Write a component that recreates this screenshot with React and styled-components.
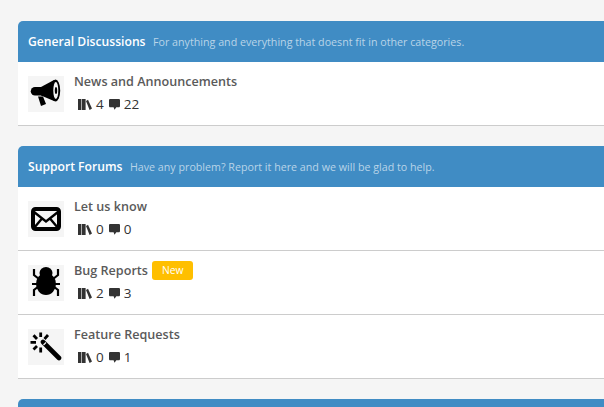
import styled, { createGlobalStyle } from "styled-components";

const GlobalStyle = createGlobalStyle`
  html, body {
    margin: 0;
    height: 100%;
    overflow: hidden;
    background: #f5f5f5;
  }
  body {
    font-family: "Open Sans", "Liberation Sans", sans-serif;
  }
`;

const Page = styled.div`
  box-sizing: border-box;
  height: 100vh;
  overflow: hidden;
  padding: 21px 0 0 18px;
  display: flex;
  flex-direction: column;
  gap: 20px;
`;

const Panel = styled.section`
  flex: none;
  background: #fff;
  border-top-left-radius: 5px;
`;

const Header = styled.header`
  height: 41px;
  background: #408cc4;
  border-radius: 5px 0 0 0;
  display: flex;
  align-items: center;
  padding-left: 10px;
  gap: 7.500px;
`;

const Heading = styled.h2`
  margin: 0;
  font-size: 12.150px;
  font-weight: 600;
  color: #fff;
`;

const Description = styled.span`
  font-size: 10.700px;
  color: #b9d4e8;
`;

const Row = styled.div`
  height: 64px;
  box-sizing: border-box;
  border-bottom: 1px solid #ccc;
  display: flex;
  padding: 14px 0 0 10px;
  gap: 10px;
`;

const IconBox = styled.div`
  width: 36px;
  height: 36px;
  flex: none;
  background: #f5f5f5;
  display: flex;
  align-items: center;
  justify-content: center;
`;

const Body = styled.div`
  display: flex;
  flex-direction: column;
  margin-top: -4px;
`;

const TitleLine = styled.div`
  display: flex;
  align-items: center;
  gap: 4px;
  height: 19px;
`;

const Title = styled.span`
  font-size: 12.600px;
  font-weight: 600;
  color: #5a5a5a;
`;

const Badge = styled.span`
  background: #ffbf00;
  color: #fff;
  font-size: 10.300px;
  line-height: 19px;
  height: 19px;
  padding: 0 10px;
  border-radius: 3px;
`;

const Stats = styled.div`
  display: flex;
  align-items: center;
  height: 20px;
  margin-top: 3px;
  padding-left: 4px;
  font-size: 13.500px;
  color: #333;
`;

const Stat = styled.span`
  display: flex;
  align-items: center;
  gap: 4px;
  margin-right: 5px;
`;

const BooksIcon = () => (
  <svg width="14" height="11" viewBox="0 0 14 11" fill="#333">
    <rect x="0" y="0" width="3.400" height="11" />
    <rect x="4" y="0" width="3.600" height="11" />
    <path d="M8 2 10 .8 14 9.600 11.600 11z" />
  </svg>
);

const CommentIcon = () => (
  <svg width="11" height="11" viewBox="0 0 12 12" fill="#333">
    <path d="M1.400 0h9.200C11.400 0 12 .6 12 1.400v6.200C12 8.400 11.400 9 10.600 9H8l-2 2.600L5 9H1.400C.6 9 0 8.400 0 7.600V1.400C0 .6.6 0 1.400 0z" />
  </svg>
);

const Megaphone = () => (
  <svg width="32" height="32" viewBox="0 0 32 32">
    <path d="M5 9h7v8.500H5a4.250 4.250 0 0 1 0-8.500z" fill="#000" />
    <path d="M11 9 24 2c1 3 2 6 2 10.500S25 20 24 23L11 17.500z" fill="#000" />
    <ellipse cx="25.500" cy="12.500" rx="4.700" ry="11" fill="#000" />
    <ellipse cx="25.800" cy="12.500" rx="2.500" ry="8.500" fill="#f5f5f5" />
    <ellipse cx="26" cy="12.500" rx="1.200" ry="3.600" fill="#000" />
    <path d="M8 18.500h5l3 7.500-5 2z" fill="#000" />
  </svg>
);

const Envelope = () => (
  <svg width="30" height="24" viewBox="0 0 30 24">
    <rect x="2" y="2" width="26" height="20" rx="2.500" fill="#f5f5f5" stroke="#000" strokeWidth="4" />
    <path d="M3 5 15 14.500 27 5M3 21l8-9.500M27 21l-8-9.500" fill="none" stroke="#000" strokeWidth="2.400" />
  </svg>
);

const Bug = () => (
  <svg width="30" height="32" viewBox="0 0 30 32">
    <ellipse cx="15" cy="17" rx="10" ry="11" fill="#000" />
    <ellipse cx="15" cy="6" rx="6.500" ry="6" fill="#000" />
    <path d="M3 2v6l5 4M27 2v6l-5 4M1 17h28M3 29v-6l5-4M27 29v-6l-5-4" fill="none" stroke="#000" strokeWidth="2.200" />
  </svg>
);

const Wand = () => (
  <svg width="32" height="32" viewBox="0 0 32 32">
    <path d="M13 11 29 27" fill="none" stroke="#000" strokeWidth="4.600" strokeLinecap="round" />
    <path d="M16 11.500 13.500 14" fill="none" stroke="#f5f5f5" strokeWidth="1.200" />
    <path d="M10.700 1.500v4.500M.5 11.300H6M10.700 16.500V21.500M3.500 4.200l3.500 3.800M3.500 18.500l3.500-3.500M18 4 14.500 8" fill="none" stroke="#000" strokeWidth="2.800" />
  </svg>
);

const groups = [
  {
    name: "General Discussions",
    text: "For anything and everything that doesnt fit in other categories.",
    forums: [{ title: "News and Announcements", icon: <Megaphone />, topics: 4, posts: 22 }],
  },
  {
    name: "Support Forums",
    text: "Have any problem? Report it here and we will be glad to help.",
    forums: [
      { title: "Let us know", icon: <Envelope />, topics: 0, posts: 0 },
      { title: "Bug Reports", icon: <Bug />, topics: 2, posts: 3, isNew: true },
      { title: "Feature Requests", icon: <Wand />, topics: 0, posts: 1 },
    ],
  },
];

export default function App() {
  return (
    <>
      <GlobalStyle />
      <Page>
        {groups.map((group) => (
          <Panel key={group.name}>
            <Header>
              <Heading>{group.name}</Heading>
              <Description>{group.text}</Description>
            </Header>
            {group.forums.map((forum) => (
              <Row key={forum.title}>
                <IconBox>{forum.icon}</IconBox>
                <Body>
                  <TitleLine>
                    <Title>{forum.title}</Title>
                    {forum.isNew && <Badge>New</Badge>}
                  </TitleLine>
                  <Stats>
                    <Stat>
                      <BooksIcon />
                      {forum.topics}
                    </Stat>
                    <Stat>
                      <CommentIcon />
                      {forum.posts}
                    </Stat>
                  </Stats>
                </Body>
              </Row>
            ))}
          </Panel>
        ))}
        <Panel>
          <Header />
        </Panel>
      </Page>
    </>
  );
}
